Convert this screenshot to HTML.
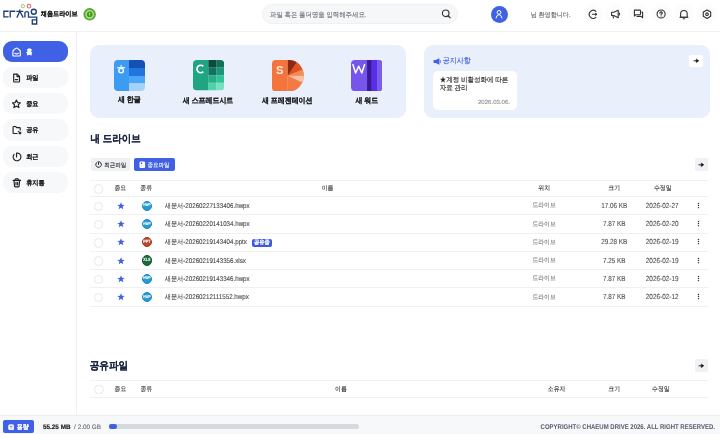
<!DOCTYPE html>
<html lang="ko"><head><meta charset="utf-8">
<style>
#w{position:absolute;left:0;top:0;width:720px;height:434px;overflow:hidden;will-change:transform}
*{box-sizing:border-box;margin:0;padding:0}
html,body{width:720px;height:434px;overflow:hidden;background:#fff;font-family:"Liberation Sans",sans-serif;color:#222}
.a{position:absolute}
.t{position:absolute;white-space:nowrap;line-height:1;text-rendering:geometricPrecision}
</style></head><body><div id="w">

<div class="a" style="left:0px;top:30.6px;width:720px;height:1px;background:#eff1f4;border-radius:0px;"></div>
<svg class="a" style="left:0px;top:0px" width="40" height="28" viewBox="0 0 40 28"><g fill="none" stroke="#1f3f78" stroke-width="1.35" stroke-linejoin="miter"><path d="M8.6 11.2H3.9V16.9H8.6"/><path d="M10.2 17.4V11.2H15.3"/><path d="M16.3 11.3H23.3M19.8 9.6V11.3M19.8 11.3L16.9 17.6M19.8 11.3L23.2 17.6"/><path d="M24.9 17.6V12.8Q24.9 11.6 26.7 11.6Q28.5 11.6 28.5 12.8V17.1H36.7V24H32.3V19.8H36.7"/><circle cx="33.8" cy="11.7" r="2.5"/></g><circle cx="22.9" cy="6.2" r="1.65" fill="none" stroke="#9cc46e" stroke-width="1"/><circle cx="29.0" cy="6.2" r="1.75" fill="none" stroke="#dc7279" stroke-width="1.15"/></svg>
<div class="t" style="left:40.8px;top:12.0px;font-size:6.15px;font-weight:700;color:#1a1a1a;letter-spacing:0.00px;;transform:scaleY(1.1);transform-origin:0 60%;-webkit-text-stroke:0.09px #1a1a1a;">채움드라이브</div>
<svg class="a" style="left:82.5px;top:8px" width="13.5" height="13" viewBox="0 0 13.5 13"><circle cx="6.65" cy="6.3" r="6.2" fill="#5ea43a"/><circle cx="6.65" cy="6.3" r="3.7" fill="#4f9430" stroke="#a8f07e" stroke-width="1.3"/><path d="M6.65 4.6V7.4" stroke="#b8f598" stroke-width="0.9"/></svg>
<div class="a" style="left:261.5px;top:4px;width:196px;height:20.3px;background:#f6f7f9;border-radius:10.2px;border:1px solid #eef0f3"></div>
<div class="t" style="left:270px;top:12.7px;font-size:6.40px;font-weight:400;color:#66696e;letter-spacing:0.00px;;transform:scaleY(1.1);transform-origin:0 60%;-webkit-text-stroke:0.075px #66696e;">파일 혹은 폴더명을 입력해주세요.</div>
<svg class="a" style="left:441px;top:9px" width="11" height="10" viewBox="0 0 11 10"><circle cx="4.7" cy="4.3" r="3.3" fill="none" stroke="#333" stroke-width="1.15"/><path d="M7.1 6.7L9.5 9.1" stroke="#333" stroke-width="1.3"/></svg>
<div class="a" style="left:490.8px;top:5.6px;width:17px;height:17px;background:#3f62e4;border-radius:8.5px;"></div>
<svg class="a" style="left:494.3px;top:8.6px" width="10" height="11" viewBox="0 0 10 11"><circle cx="5" cy="3.4" r="1.9" fill="none" stroke="#fff" stroke-width="1"/><path d="M2 9.4Q2.6 5.6 5 5.6Q7.4 5.6 8 9.4" fill="none" stroke="#fff" stroke-width="1"/></svg>
<div class="t" style="left:530.7px;top:12.8px;font-size:6.10px;font-weight:400;color:#555;letter-spacing:0.00px;;transform:scaleY(1.1);transform-origin:0 60%;-webkit-text-stroke:0.075px #555;">님 환영합니다.</div>
<div class="a" style="left:582.6px;top:4px;width:20px;height:20px;background:#fcfcfd;border-radius:10px;"></div>
<div class="a" style="left:605.4px;top:4px;width:20px;height:20px;background:#fcfcfd;border-radius:10px;"></div>
<div class="a" style="left:628.4px;top:4px;width:20px;height:20px;background:#fcfcfd;border-radius:10px;"></div>
<div class="a" style="left:650.7px;top:4px;width:20px;height:20px;background:#fcfcfd;border-radius:10px;"></div>
<div class="a" style="left:674px;top:4px;width:20px;height:20px;background:#fcfcfd;border-radius:10px;"></div>
<div class="a" style="left:696.5px;top:4px;width:20px;height:20px;background:#fcfcfd;border-radius:10px;"></div>
<svg class="a" style="left:586px;top:8px" width="12" height="12" viewBox="0 0 12 12"><path d="M9.9 3.3A4 4 0 1 0 9.9 9.3" fill="none" stroke="#333" stroke-width="1.1" stroke-linejoin="round" stroke-linecap="round"/><path d="M6.4 6.3H10.6" fill="none" stroke="#333" stroke-width="1.1" stroke-linejoin="round" stroke-linecap="round"/><path d="M9.6 5.2L10.9 6.3L9.6 7.4Z" fill="#333" stroke="#333" stroke-width="0.8" stroke-linejoin="round"/></svg>
<svg class="a" style="left:610px;top:9px" width="11" height="11" viewBox="0 0 11 11"><path d="M1.6 3.3H3.8L8.2 1.3V8.7L3.8 6.5H1.6Z" fill="none" stroke="#333" stroke-width="1.1" stroke-linejoin="round" stroke-linecap="round"/><path d="M2.9 6.6L3.5 8.9" fill="none" stroke="#333" stroke-width="1.1" stroke-linejoin="round" stroke-linecap="round"/><path d="M9.3 4.1Q9.9 5 9.3 5.9" fill="none" stroke="#333" stroke-width="1.1" stroke-linejoin="round" stroke-linecap="round"/></svg>
<svg class="a" style="left:633px;top:9px" width="11" height="10" viewBox="0 0 11 10"><path d="M1.4 1.1H6.9Q7.5 1.1 7.5 1.7V5.1Q7.5 5.7 6.9 5.7H2.9L1.4 7Z" fill="none" stroke="#333" stroke-width="1.1" stroke-linejoin="round" stroke-linecap="round"/><path d="M4 7.4H8L9.6 8.7V3.6Q9.6 3.1 9.1 3.1H8.8" fill="none" stroke="#333" stroke-width="1.1" stroke-linejoin="round" stroke-linecap="round"/></svg>
<svg class="a" style="left:656px;top:9px" width="10" height="10" viewBox="0 0 10 10"><circle cx="5.1" cy="5" r="4.05" fill="none" stroke="#333" stroke-width="1.1" stroke-linejoin="round" stroke-linecap="round"/><path d="M3.9 4.1Q3.9 2.9 5.1 2.9Q6.3 2.9 6.3 3.9Q6.3 4.6 5.1 5.1V5.7" fill="none" stroke="#333" stroke-width="1.1" stroke-linejoin="round" stroke-linecap="round"/><circle cx="5.1" cy="7.1" r="0.55" fill="#333"/></svg>
<svg class="a" style="left:679px;top:8.5px" width="10" height="11" viewBox="0 0 10 11"><path d="M1.6 8.2V5.1Q1.6 1.5 4.9 1.5Q8.2 1.5 8.2 5.1V8.2Z" fill="none" stroke="#333" stroke-width="1.1" stroke-linejoin="round" stroke-linecap="round"/><path d="M0.9 8.3H8.9" fill="none" stroke="#333" stroke-width="1.1" stroke-linejoin="round" stroke-linecap="round"/><path d="M4.2 9.8H5.6" fill="none" stroke="#333" stroke-width="1.1" stroke-linejoin="round" stroke-linecap="round"/></svg>
<svg class="a" style="left:701.5px;top:9px" width="10" height="10" viewBox="0 0 10 10"><path d="M5 0.9L8.7 3.05V7.35L5 9.5L1.3 7.35V3.05Z" fill="none" stroke="#333" stroke-width="1.1" stroke-linejoin="round" stroke-linecap="round"/><circle cx="5" cy="5.2" r="1.3" fill="none" stroke="#333" stroke-width="1.1" stroke-linejoin="round" stroke-linecap="round"/></svg>
<div class="a" style="left:75.9px;top:31px;width:1px;height:384px;background:#eff1f4;border-radius:0px;"></div>
<div class="a" style="left:3px;top:40.8px;width:64.7px;height:21.3px;background:#4060e6;border-radius:9px;"></div>
<svg class="a" style="left:12px;top:46.5px" width="10" height="10" viewBox="0 0 10 10"><path d="M0.9 8.5V4.6Q0.9 3.8 1.5 3.3L3.7 1.4Q4.6 0.7 5.5 1.4L7.7 3.3Q8.3 3.8 8.3 4.6V8.5Q8.3 9 7.8 9H1.4Q0.9 9 0.9 8.5Z" fill="none" stroke="#fff" stroke-width="1.15" stroke-linejoin="round" stroke-linecap="round"/><path d="M2.9 6.3Q4.6 7.6 6.3 6.3" fill="none" stroke="#fff" stroke-width="1.15" stroke-linejoin="round" stroke-linecap="round"/></svg>
<div class="t" style="left:26.2px;top:49.699999999999996px;font-size:6.15px;font-weight:700;color:#fff;letter-spacing:0.00px;;transform:scaleY(1.1);transform-origin:0 60%;-webkit-text-stroke:0.04px #fff;">홈</div>
<div class="a" style="left:3px;top:67px;width:64.7px;height:21.3px;background:#f7f8fa;border-radius:9px;"></div>
<svg class="a" style="left:12px;top:72.7px" width="10" height="10" viewBox="0 0 10 10"><path d="M1.7 1.1H5.2L7.5 3.4V8.5Q7.5 9 7 9H2.2Q1.7 9 1.7 8.5Z" fill="none" stroke="#222" stroke-width="1.15" stroke-linejoin="round" stroke-linecap="round"/><path d="M5 1.2V3.6H7.4" fill="none" stroke="#222" stroke-width="1.15" stroke-linejoin="round" stroke-linecap="round"/><path d="M3.3 6.6H5.6" fill="none" stroke="#222" stroke-width="1.15" stroke-linejoin="round" stroke-linecap="round"/></svg>
<div class="t" style="left:26.2px;top:75.9px;font-size:6.15px;font-weight:700;color:#222;letter-spacing:0.00px;;transform:scaleY(1.1);transform-origin:0 60%;-webkit-text-stroke:0.04px #222;">파일</div>
<div class="a" style="left:3px;top:93.2px;width:64.7px;height:21.3px;background:#f7f8fa;border-radius:9px;"></div>
<svg class="a" style="left:12px;top:98.9px" width="10" height="10" viewBox="0 0 10 10"><path d="M4.4 1.1L5.6 3.6L8.3 3.9L6.3 5.8L6.9 8.6L4.4 7.2L1.9 8.6L2.5 5.8L0.5 3.9L3.2 3.6Z" fill="none" stroke="#222" stroke-width="1.15" stroke-linejoin="round" stroke-linecap="round"/></svg>
<div class="t" style="left:26.2px;top:102.10000000000001px;font-size:6.15px;font-weight:700;color:#222;letter-spacing:0.00px;;transform:scaleY(1.1);transform-origin:0 60%;-webkit-text-stroke:0.04px #222;">중요</div>
<div class="a" style="left:3px;top:119.4px;width:64.7px;height:21.3px;background:#f7f8fa;border-radius:9px;"></div>
<svg class="a" style="left:12px;top:125.10000000000001px" width="10" height="10" viewBox="0 0 10 10"><path d="M5.1 8.5H1.8Q1.1 8.5 1.1 7.8V2.2Q1.1 1.5 1.8 1.5H3.6L4.6 2.6H7.5Q8.2 2.6 8.2 3.3V5.1" fill="none" stroke="#222" stroke-width="1.15" stroke-linejoin="round" stroke-linecap="round"/><path d="M6.3 6.4L8.4 8.5" fill="none" stroke="#222" stroke-width="1.15" stroke-linejoin="round" stroke-linecap="round"/><path d="M8.9 6.8V9H6.7Z" fill="#222" stroke="#222" stroke-width="0.5" stroke-linejoin="round"/></svg>
<div class="t" style="left:26.2px;top:128.3px;font-size:6.15px;font-weight:700;color:#222;letter-spacing:0.00px;;transform:scaleY(1.1);transform-origin:0 60%;-webkit-text-stroke:0.04px #222;">공유</div>
<div class="a" style="left:3px;top:146px;width:64.7px;height:21.3px;background:#f7f8fa;border-radius:9px;"></div>
<svg class="a" style="left:12px;top:151.7px" width="10" height="10" viewBox="0 0 10 10"><path d="M2.1 2.3A3.9 3.9 0 1 0 4.55 1V4.9" fill="none" stroke="#222" stroke-width="1.15" stroke-linejoin="round" stroke-linecap="round"/></svg>
<div class="t" style="left:26.2px;top:154.9px;font-size:6.15px;font-weight:700;color:#222;letter-spacing:0.00px;;transform:scaleY(1.1);transform-origin:0 60%;-webkit-text-stroke:0.04px #222;">최근</div>
<div class="a" style="left:3px;top:171.8px;width:64.7px;height:21.3px;background:#f7f8fa;border-radius:9px;"></div>
<svg class="a" style="left:12px;top:177.5px" width="10" height="10" viewBox="0 0 10 10"><path d="M1.1 2.4H8.6" fill="none" stroke="#222" stroke-width="1.15" stroke-linejoin="round" stroke-linecap="round"/><path d="M3.3 2.4V1.4Q3.3 0.9 3.8 0.9H5.8Q6.3 0.9 6.3 1.4V2.4" fill="none" stroke="#222" stroke-width="1.15" stroke-linejoin="round" stroke-linecap="round"/><path d="M2 2.4L2.5 8.2Q2.6 8.8 3.2 8.8H6.4Q7 8.8 7.1 8.2L7.6 2.4" fill="none" stroke="#222" stroke-width="1.15" stroke-linejoin="round" stroke-linecap="round"/><path d="M4 4.4V6.8M5.6 4.4V6.8" fill="none" stroke="#222" stroke-width="1.15" stroke-linejoin="round" stroke-linecap="round"/></svg>
<div class="t" style="left:26.2px;top:180.70000000000002px;font-size:6.15px;font-weight:700;color:#222;letter-spacing:0.00px;;transform:scaleY(1.1);transform-origin:0 60%;-webkit-text-stroke:0.04px #222;">휴지통</div>
<div class="a" style="left:90px;top:44.6px;width:315.5px;height:73.8px;background:#eaeffc;border-radius:9px;"></div>
<svg class="a" style="left:114px;top:60px" width="31" height="31" viewBox="0 0 31 31"><defs><clipPath id="c1"><rect x="0" y="0" width="31" height="31" rx="4"/></clipPath></defs><g clip-path="url(#c1)"><rect x="0" y="0" width="15" height="31" fill="#3d9cf1"/><rect x="15" y="0" width="16" height="8" fill="#1550b5"/><rect x="15" y="8" width="16" height="8" fill="#2075de"/><rect x="15" y="16" width="16" height="7.5" fill="#4ba7f5"/><rect x="15" y="23.5" width="16" height="7.5" fill="#a5d2f8"/></g><path d="M7.1 5V6.6" stroke="#fff" stroke-width="1.2"/><path d="M3.2 7.9Q7.1 6.6 11 7.9" fill="none" stroke="#fff" stroke-width="1.2"/><circle cx="7.1" cy="10.6" r="2.3" fill="none" stroke="#fff" stroke-width="1.35"/></svg>
<div class="t" style="left:118px;top:97.6px;font-size:6.95px;font-weight:700;color:#222;letter-spacing:0.00px;;transform:scaleY(1.1);transform-origin:0 60%;-webkit-text-stroke:0.09px #222;">새 한글</div>
<svg class="a" style="left:193px;top:60.3px" width="31.3" height="30.5" viewBox="0 0 31.3 30.5"><defs><clipPath id="c2"><rect x="0" y="0" width="31.3" height="30.5" rx="4"/></clipPath></defs><g clip-path="url(#c2)"><rect x="0" y="0" width="15.5" height="30.5" fill="#20a582"/><rect x="15.4" y="0" width="8" height="7.6" fill="#0a4b3b"/><rect x="23.3" y="0" width="8" height="7.6" fill="#117058"/><rect x="15.4" y="7.5" width="8" height="7.7" fill="#13735b"/><rect x="23.3" y="7.5" width="8" height="7.7" fill="#1a977a"/><rect x="15.4" y="15.2" width="8" height="7.6" fill="#26ad89"/><rect x="23.3" y="15.2" width="8" height="7.6" fill="#30c398"/><rect x="15.4" y="22.8" width="8" height="7.7" fill="#4fd2a9"/><rect x="23.3" y="22.8" width="8" height="7.7" fill="#78e0bf"/></g><path d="M10.3 6.4A3.7 3.7 0 1 0 10.3 11.6" fill="none" stroke="#fff" stroke-width="1.6"/></svg>
<div class="t" style="left:182.8px;top:98.9px;font-size:6.95px;font-weight:700;color:#222;letter-spacing:0.00px;;transform:scaleY(1.1);transform-origin:0 60%;-webkit-text-stroke:0.09px #222;">새 스프레드시트</div>
<svg class="a" style="left:271.9px;top:59.6px" width="32" height="31.5" viewBox="0 0 32 31.5"><path d="M3.8 0H15.8V31.5H3.8Q0 31.5 0 27.7V3.8Q0 0 3.8 0Z" fill="#f3743c"/><path d="M15.8 0H17A14.7 15.75 0 0 1 17 31.5H15.8Z" fill="#f47a44"/><path d="M15.8 15.75V0H17Q21.5 0 24.8 2.3Z" fill="#8b2915"/><path d="M15.8 15.75L24.8 2.3Q28.6 5 30.4 9.6Z" fill="#e2521f"/><path d="M15.8 15.75L30.4 9.6Q31.7 12.6 31.7 15.75Z" fill="#f48b58"/><path d="M15.8 15.75H31.7Q31.7 19.4 30.1 22.5Z" fill="#f9c0a2"/><text x="3.9" y="14.1" font-family="Liberation Sans" font-weight="700" font-size="11.2" fill="#fde8da">S</text></svg>
<div class="t" style="left:262px;top:98.9px;font-size:6.95px;font-weight:700;color:#222;letter-spacing:0.00px;;transform:scaleY(1.1);transform-origin:0 60%;-webkit-text-stroke:0.09px #222;">새 프레젠테이션</div>
<svg class="a" style="left:350.9px;top:60px" width="31.6" height="31.2" viewBox="0 0 31.6 31.2"><defs><clipPath id="c4"><rect x="0" y="0" width="31.6" height="31.2" rx="4"/></clipPath></defs><g clip-path="url(#c4)"><rect x="0" y="0" width="31.6" height="31.2" fill="#7555ea"/><rect x="16.1" y="0" width="4.6" height="31.2" fill="#3a1a98"/><rect x="20.6" y="0" width="5.4" height="31.2" fill="#5a2ee6"/><rect x="26" y="0" width="5.6" height="31.2" fill="#7a5cf0"/></g><path d="M1.9 4.6L4.6 13L7.7 6.3L10.8 13L13.6 4.6" fill="none" stroke="#fff" stroke-width="1.5" stroke-linejoin="round" stroke-linecap="round"/></svg>
<div class="t" style="left:355.4px;top:98.9px;font-size:6.95px;font-weight:700;color:#222;letter-spacing:0.00px;;transform:scaleY(1.1);transform-origin:0 60%;-webkit-text-stroke:0.09px #222;">새 워드</div>
<div class="a" style="left:424px;top:44.6px;width:286.3px;height:73.8px;background:#eaeffc;border-radius:9px;"></div>
<svg class="a" style="left:433.3px;top:58px" width="8" height="7" viewBox="0 0 8 7"><path d="M0.6 2H2.6L6.4 0.3V6.7L2.6 5H0.6Z" fill="#4060e6"/><path d="M7.3 2.1V4.9" stroke="#4060e6" stroke-width="0.8"/></svg>
<div class="t" style="left:442.8px;top:58.1px;font-size:7.00px;font-weight:500;color:#4060e6;letter-spacing:0.00px;;transform:scaleY(1.1);transform-origin:0 60%;-webkit-text-stroke:0.125px #4060e6;">공지사항</div>
<div class="a" style="left:433px;top:71px;width:84px;height:38.6px;background:#fff;border-radius:5px;"></div>
<div class="t" style="left:439.7px;top:76.8px;font-size:6.50px;font-weight:500;color:#222;letter-spacing:0.00px;line-height:8.3px;transform:scaleY(1.1);transform-origin:0 60%;-webkit-text-stroke:0.1px #222;">★계정 비활성화에 따른<br>자료 관리</div>
<div class="t" style="left:478px;top:100px;font-size:6.05px;font-weight:400;color:#8a8d93;letter-spacing:0.00px;;-webkit-text-stroke:0.1px #8a8d93;">2026.03.06.</div>
<div class="a" style="left:688.6px;top:54.5px;width:14px;height:12.1px;background:#fff;border-radius:2px;"></div>
<svg class="a" style="left:692.8px;top:57.6px" width="7" height="6" viewBox="0 0 7 6"><path d="M0.6 2.8H3.8" stroke="#111" stroke-width="0.9"/><path d="M3.3 0.9L5.9 2.8L3.3 4.7Z" fill="#111" stroke="#111" stroke-width="0.4" stroke-linejoin="round"/></svg>
<div class="t" style="left:90.5px;top:135.1px;font-size:9.50px;font-weight:700;color:#1d2744;letter-spacing:0.00px;;transform:scaleY(1.1);transform-origin:0 60%;-webkit-text-stroke:0.15px #1d2744;">내 드라이브</div>
<div class="a" style="left:90.5px;top:158.4px;width:39.4px;height:12.5px;background:#eef0f3;border-radius:2px;"></div>
<svg class="a" style="left:94.5px;top:161.2px" width="7" height="7" viewBox="0 0 7 7"><path d="M2.1 1.1A2.8 2.8 0 1 0 3.5 0.7V3.5" fill="none" stroke="#222" stroke-width="0.95" stroke-linecap="round"/></svg>
<div class="t" style="left:104.25px;top:163.6px;font-size:5.50px;font-weight:500;color:#222;letter-spacing:0.00px;;transform:scaleY(1.1);transform-origin:0 60%;-webkit-text-stroke:0.1px #222;">최근파일</div>
<div class="a" style="left:134.25px;top:158.4px;width:40.6px;height:12.5px;background:#4060e6;border-radius:2px;"></div>
<svg class="a" style="left:138.5px;top:161px" width="7" height="7.5" viewBox="0 0 7 7.5"><path d="M1.8 0.4H4.8Q6.1 0.4 6.1 1.7V6Q6.1 7.1 5 7.1H1.6Q0.5 7.1 0.5 6V1.7Q0.5 0.4 1.8 0.4Z" fill="#fff"/><circle cx="2.6" cy="2.2" r="0.75" fill="#2a3a8a"/><path d="M2 4.6H4.6" stroke="#cdd6f7" stroke-width="0.7"/></svg>
<div class="t" style="left:147.4px;top:163.6px;font-size:5.50px;font-weight:500;color:#fff;letter-spacing:0.00px;;transform:scaleY(1.1);transform-origin:0 60%;-webkit-text-stroke:0.1px #fff;">중요파일</div>
<div class="a" style="left:695px;top:158px;width:12.8px;height:13px;background:#eff1f4;border-radius:2px;"></div>
<svg class="a" style="left:698.3px;top:161.7px" width="7" height="6" viewBox="0 0 7 6"><path d="M0.6 2.8H3.8" stroke="#111" stroke-width="0.9"/><path d="M3.3 0.9L5.9 2.8L3.3 4.7Z" fill="#111" stroke="#111" stroke-width="0.4" stroke-linejoin="round"/></svg>
<div class="a" style="left:90px;top:179.6px;width:618px;height:1px;background:#eef0f3;border-radius:0px;"></div>
<div class="a" style="left:93.75px;top:184.25px;width:9.5px;height:9.5px;background:#fff;border-radius:4.75px;border:1px solid #e6e7eb"></div>
<div class="t" style="left:114.4px;top:187.2px;font-size:5.90px;font-weight:500;color:#2a2a2a;letter-spacing:0.00px;;transform:scaleY(1.1);transform-origin:0 60%;-webkit-text-stroke:0.08px #2a2a2a;">중요</div>
<div class="t" style="left:140.3px;top:187.2px;font-size:5.90px;font-weight:500;color:#2a2a2a;letter-spacing:0.00px;;transform:scaleY(1.1);transform-origin:0 60%;-webkit-text-stroke:0.08px #2a2a2a;">종류</div>
<div class="t" style="left:321.7px;top:187.2px;font-size:5.90px;font-weight:500;color:#2a2a2a;letter-spacing:0.00px;;transform:scaleY(1.1);transform-origin:0 60%;-webkit-text-stroke:0.08px #2a2a2a;">이름</div>
<div class="t" style="left:538.3px;top:187.2px;font-size:5.90px;font-weight:500;color:#2a2a2a;letter-spacing:0.00px;;transform:scaleY(1.1);transform-origin:0 60%;-webkit-text-stroke:0.08px #2a2a2a;">위치</div>
<div class="t" style="left:608.3px;top:187.2px;font-size:5.90px;font-weight:500;color:#2a2a2a;letter-spacing:0.00px;;transform:scaleY(1.1);transform-origin:0 60%;-webkit-text-stroke:0.08px #2a2a2a;">크기</div>
<div class="t" style="left:653.9px;top:187.2px;font-size:5.90px;font-weight:500;color:#2a2a2a;letter-spacing:0.00px;;transform:scaleY(1.1);transform-origin:0 60%;-webkit-text-stroke:0.08px #2a2a2a;">수정일</div>
<div class="a" style="left:90px;top:196.4px;width:618px;height:1px;background:#eef0f3;border-radius:0px;"></div>
<div class="a" style="left:93.75px;top:201.575px;width:9.5px;height:9.5px;background:#fff;border-radius:4.75px;border:1px solid #e6e7eb"></div>
<svg class="a" style="left:116.8px;top:201.92499999999998px" width="8" height="8" viewBox="0 0 8 8"><path d="M4 0.3L5 2.8L7.7 2.9L5.6 4.6L6.3 7.3L4 5.8L1.7 7.3L2.4 4.6L0.3 2.9L3 2.8Z" fill="#4060e6"/></svg>
<div class="a" style="left:141.8px;top:200.725px;width:10.2px;height:10.2px;background:#2a9ad4;border-radius:5.1px;border:0.6px solid #1f86bd"></div>
<div class="t" style="left:141.8px;top:204.325px;font-size:3.10px;font-weight:700;color:#fff;letter-spacing:0.00px;width:10.2px;text-align:center;transform:scaleY(1.25);transform-origin:0 50%;-webkit-text-stroke:0.08px #fff;">HWP</div>
<div class="t" style="left:164.7px;top:203.92499999999998px;font-size:6.20px;font-weight:400;color:#4a4a4a;letter-spacing:0.00px;transform:scaleY(1.12);transform-origin:0 60%;-webkit-text-stroke:0.1px #4a4a4a;">새문서-20260227133406.hwpx</div>
<div class="t" style="left:532.5px;top:204.42499999999998px;font-size:5.80px;font-weight:400;color:#6b6b6b;letter-spacing:0.00px;;transform:scaleY(1.1);transform-origin:0 60%;-webkit-text-stroke:0.06px #6b6b6b;">드라이브</div>
<div class="t" style="left:584.3px;top:203.825px;font-size:6.35px;font-weight:400;color:#555;letter-spacing:0.00px;width:60px;text-align:center;transform:scaleY(1.15);transform-origin:0 60%;-webkit-text-stroke:0.1px #555;">17.06 KB</div>
<div class="t" style="left:645.8px;top:203.825px;font-size:6.40px;font-weight:400;color:#555;letter-spacing:0.00px;transform:scaleY(1.15);transform-origin:0 60%;-webkit-text-stroke:0.1px #555;">2026-02-27</div>
<svg class="a" style="left:696.8px;top:201.825px" width="3" height="8" viewBox="0 0 3 8"><circle cx="1.5" cy="1.45" r="0.72" fill="#333"/><circle cx="1.5" cy="3.55" r="0.72" fill="#333"/><circle cx="1.5" cy="5.65" r="0.72" fill="#333"/></svg>
<div class="a" style="left:90px;top:214.45px;width:618px;height:1px;background:#eef0f3;border-radius:0px;"></div>
<div class="a" style="left:93.75px;top:219.825px;width:9.5px;height:9.5px;background:#fff;border-radius:4.75px;border:1px solid #e6e7eb"></div>
<svg class="a" style="left:116.8px;top:220.17499999999998px" width="8" height="8" viewBox="0 0 8 8"><path d="M4 0.3L5 2.8L7.7 2.9L5.6 4.6L6.3 7.3L4 5.8L1.7 7.3L2.4 4.6L0.3 2.9L3 2.8Z" fill="#4060e6"/></svg>
<div class="a" style="left:141.8px;top:218.975px;width:10.2px;height:10.2px;background:#2a9ad4;border-radius:5.1px;border:0.6px solid #1f86bd"></div>
<div class="t" style="left:141.8px;top:222.575px;font-size:3.10px;font-weight:700;color:#fff;letter-spacing:0.00px;width:10.2px;text-align:center;transform:scaleY(1.25);transform-origin:0 50%;-webkit-text-stroke:0.08px #fff;">HWP</div>
<div class="t" style="left:164.7px;top:222.17499999999998px;font-size:6.20px;font-weight:400;color:#4a4a4a;letter-spacing:0.00px;transform:scaleY(1.12);transform-origin:0 60%;-webkit-text-stroke:0.1px #4a4a4a;">새문서-20260220141034.hwpx</div>
<div class="t" style="left:532.5px;top:222.67499999999998px;font-size:5.80px;font-weight:400;color:#6b6b6b;letter-spacing:0.00px;;transform:scaleY(1.1);transform-origin:0 60%;-webkit-text-stroke:0.06px #6b6b6b;">드라이브</div>
<div class="t" style="left:584.3px;top:222.075px;font-size:6.35px;font-weight:400;color:#555;letter-spacing:0.00px;width:60px;text-align:center;transform:scaleY(1.15);transform-origin:0 60%;-webkit-text-stroke:0.1px #555;">7.87 KB</div>
<div class="t" style="left:645.8px;top:222.075px;font-size:6.40px;font-weight:400;color:#555;letter-spacing:0.00px;transform:scaleY(1.15);transform-origin:0 60%;-webkit-text-stroke:0.1px #555;">2026-02-20</div>
<svg class="a" style="left:696.8px;top:220.075px" width="3" height="8" viewBox="0 0 3 8"><circle cx="1.5" cy="1.45" r="0.72" fill="#333"/><circle cx="1.5" cy="3.55" r="0.72" fill="#333"/><circle cx="1.5" cy="5.65" r="0.72" fill="#333"/></svg>
<div class="a" style="left:90px;top:232.7px;width:618px;height:1px;background:#eef0f3;border-radius:0px;"></div>
<div class="a" style="left:93.75px;top:238.075px;width:9.5px;height:9.5px;background:#fff;border-radius:4.75px;border:1px solid #e6e7eb"></div>
<svg class="a" style="left:116.8px;top:238.42499999999998px" width="8" height="8" viewBox="0 0 8 8"><path d="M4 0.3L5 2.8L7.7 2.9L5.6 4.6L6.3 7.3L4 5.8L1.7 7.3L2.4 4.6L0.3 2.9L3 2.8Z" fill="#4060e6"/></svg>
<div class="a" style="left:141.8px;top:237.225px;width:10.2px;height:10.2px;background:#b94a2d;border-radius:5.1px;border:0.6px solid #9c3a22"></div>
<div class="t" style="left:141.8px;top:240.575px;font-size:3.70px;font-weight:700;color:#fff;letter-spacing:0.00px;width:10.2px;text-align:center;transform:scaleY(1.25);transform-origin:0 50%;-webkit-text-stroke:0.08px #fff;">PPT</div>
<div class="t" style="left:164.7px;top:240.42499999999998px;font-size:6.20px;font-weight:400;color:#4a4a4a;letter-spacing:0.00px;transform:scaleY(1.12);transform-origin:0 60%;-webkit-text-stroke:0.1px #4a4a4a;">새문서-20260219143404.pptx</div>
<div class="a" style="left:251.6px;top:238.92499999999998px;width:20px;height:7.9px;background:#3d5ae0;border-radius:2px;"></div>
<div class="t" style="left:253.9px;top:241.325px;font-size:5.25px;font-weight:700;color:#fff;letter-spacing:0.00px;;transform:scaleY(1.1);transform-origin:0 60%;-webkit-text-stroke:0.025px #fff;">공유중</div>
<div class="t" style="left:532.5px;top:240.92499999999998px;font-size:5.80px;font-weight:400;color:#6b6b6b;letter-spacing:0.00px;;transform:scaleY(1.1);transform-origin:0 60%;-webkit-text-stroke:0.06px #6b6b6b;">드라이브</div>
<div class="t" style="left:584.3px;top:240.325px;font-size:6.35px;font-weight:400;color:#555;letter-spacing:0.00px;width:60px;text-align:center;transform:scaleY(1.15);transform-origin:0 60%;-webkit-text-stroke:0.1px #555;">29.28 KB</div>
<div class="t" style="left:645.8px;top:240.325px;font-size:6.40px;font-weight:400;color:#555;letter-spacing:0.00px;transform:scaleY(1.15);transform-origin:0 60%;-webkit-text-stroke:0.1px #555;">2026-02-19</div>
<svg class="a" style="left:696.8px;top:238.325px" width="3" height="8" viewBox="0 0 3 8"><circle cx="1.5" cy="1.45" r="0.72" fill="#333"/><circle cx="1.5" cy="3.55" r="0.72" fill="#333"/><circle cx="1.5" cy="5.65" r="0.72" fill="#333"/></svg>
<div class="a" style="left:90px;top:250.95px;width:618px;height:1px;background:#eef0f3;border-radius:0px;"></div>
<div class="a" style="left:93.75px;top:256.325px;width:9.5px;height:9.5px;background:#fff;border-radius:4.75px;border:1px solid #e6e7eb"></div>
<svg class="a" style="left:116.8px;top:256.675px" width="8" height="8" viewBox="0 0 8 8"><path d="M4 0.3L5 2.8L7.7 2.9L5.6 4.6L6.3 7.3L4 5.8L1.7 7.3L2.4 4.6L0.3 2.9L3 2.8Z" fill="#4060e6"/></svg>
<div class="a" style="left:141.8px;top:255.475px;width:10.2px;height:10.2px;background:#1b6a3a;border-radius:5.1px;border:0.6px solid #135a2e"></div>
<div class="t" style="left:141.8px;top:258.825px;font-size:3.70px;font-weight:700;color:#fff;letter-spacing:0.00px;width:10.2px;text-align:center;transform:scaleY(1.25);transform-origin:0 50%;-webkit-text-stroke:0.08px #fff;">XLS</div>
<div class="t" style="left:164.7px;top:258.675px;font-size:6.20px;font-weight:400;color:#4a4a4a;letter-spacing:0.00px;transform:scaleY(1.12);transform-origin:0 60%;-webkit-text-stroke:0.1px #4a4a4a;">새문서-20260219143356.xlsx</div>
<div class="t" style="left:532.5px;top:259.175px;font-size:5.80px;font-weight:400;color:#6b6b6b;letter-spacing:0.00px;;transform:scaleY(1.1);transform-origin:0 60%;-webkit-text-stroke:0.06px #6b6b6b;">드라이브</div>
<div class="t" style="left:584.3px;top:258.575px;font-size:6.35px;font-weight:400;color:#555;letter-spacing:0.00px;width:60px;text-align:center;transform:scaleY(1.15);transform-origin:0 60%;-webkit-text-stroke:0.1px #555;">7.25 KB</div>
<div class="t" style="left:645.8px;top:258.575px;font-size:6.40px;font-weight:400;color:#555;letter-spacing:0.00px;transform:scaleY(1.15);transform-origin:0 60%;-webkit-text-stroke:0.1px #555;">2026-02-19</div>
<svg class="a" style="left:696.8px;top:256.575px" width="3" height="8" viewBox="0 0 3 8"><circle cx="1.5" cy="1.45" r="0.72" fill="#333"/><circle cx="1.5" cy="3.55" r="0.72" fill="#333"/><circle cx="1.5" cy="5.65" r="0.72" fill="#333"/></svg>
<div class="a" style="left:90px;top:269.2px;width:618px;height:1px;background:#eef0f3;border-radius:0px;"></div>
<div class="a" style="left:93.75px;top:274.575px;width:9.5px;height:9.5px;background:#fff;border-radius:4.75px;border:1px solid #e6e7eb"></div>
<svg class="a" style="left:116.8px;top:274.925px" width="8" height="8" viewBox="0 0 8 8"><path d="M4 0.3L5 2.8L7.7 2.9L5.6 4.6L6.3 7.3L4 5.8L1.7 7.3L2.4 4.6L0.3 2.9L3 2.8Z" fill="#4060e6"/></svg>
<div class="a" style="left:141.8px;top:273.72499999999997px;width:10.2px;height:10.2px;background:#2a9ad4;border-radius:5.1px;border:0.6px solid #1f86bd"></div>
<div class="t" style="left:141.8px;top:277.325px;font-size:3.10px;font-weight:700;color:#fff;letter-spacing:0.00px;width:10.2px;text-align:center;transform:scaleY(1.25);transform-origin:0 50%;-webkit-text-stroke:0.08px #fff;">HWP</div>
<div class="t" style="left:164.7px;top:276.925px;font-size:6.20px;font-weight:400;color:#4a4a4a;letter-spacing:0.00px;transform:scaleY(1.12);transform-origin:0 60%;-webkit-text-stroke:0.1px #4a4a4a;">새문서-20260219143346.hwpx</div>
<div class="t" style="left:532.5px;top:277.425px;font-size:5.80px;font-weight:400;color:#6b6b6b;letter-spacing:0.00px;;transform:scaleY(1.1);transform-origin:0 60%;-webkit-text-stroke:0.06px #6b6b6b;">드라이브</div>
<div class="t" style="left:584.3px;top:276.825px;font-size:6.35px;font-weight:400;color:#555;letter-spacing:0.00px;width:60px;text-align:center;transform:scaleY(1.15);transform-origin:0 60%;-webkit-text-stroke:0.1px #555;">7.87 KB</div>
<div class="t" style="left:645.8px;top:276.825px;font-size:6.40px;font-weight:400;color:#555;letter-spacing:0.00px;transform:scaleY(1.15);transform-origin:0 60%;-webkit-text-stroke:0.1px #555;">2026-02-19</div>
<svg class="a" style="left:696.8px;top:274.825px" width="3" height="8" viewBox="0 0 3 8"><circle cx="1.5" cy="1.45" r="0.72" fill="#333"/><circle cx="1.5" cy="3.55" r="0.72" fill="#333"/><circle cx="1.5" cy="5.65" r="0.72" fill="#333"/></svg>
<div class="a" style="left:90px;top:287.45px;width:618px;height:1px;background:#eef0f3;border-radius:0px;"></div>
<div class="a" style="left:93.75px;top:292.825px;width:9.5px;height:9.5px;background:#fff;border-radius:4.75px;border:1px solid #e6e7eb"></div>
<svg class="a" style="left:116.8px;top:293.175px" width="8" height="8" viewBox="0 0 8 8"><path d="M4 0.3L5 2.8L7.7 2.9L5.6 4.6L6.3 7.3L4 5.8L1.7 7.3L2.4 4.6L0.3 2.9L3 2.8Z" fill="#4060e6"/></svg>
<div class="a" style="left:141.8px;top:291.97499999999997px;width:10.2px;height:10.2px;background:#2a9ad4;border-radius:5.1px;border:0.6px solid #1f86bd"></div>
<div class="t" style="left:141.8px;top:295.575px;font-size:3.10px;font-weight:700;color:#fff;letter-spacing:0.00px;width:10.2px;text-align:center;transform:scaleY(1.25);transform-origin:0 50%;-webkit-text-stroke:0.08px #fff;">HWP</div>
<div class="t" style="left:164.7px;top:295.175px;font-size:6.20px;font-weight:400;color:#4a4a4a;letter-spacing:0.00px;transform:scaleY(1.12);transform-origin:0 60%;-webkit-text-stroke:0.1px #4a4a4a;">새문서-20260212111552.hwpx</div>
<div class="t" style="left:532.5px;top:295.675px;font-size:5.80px;font-weight:400;color:#6b6b6b;letter-spacing:0.00px;;transform:scaleY(1.1);transform-origin:0 60%;-webkit-text-stroke:0.06px #6b6b6b;">드라이브</div>
<div class="t" style="left:584.3px;top:295.075px;font-size:6.35px;font-weight:400;color:#555;letter-spacing:0.00px;width:60px;text-align:center;transform:scaleY(1.15);transform-origin:0 60%;-webkit-text-stroke:0.1px #555;">7.87 KB</div>
<div class="t" style="left:645.8px;top:295.075px;font-size:6.40px;font-weight:400;color:#555;letter-spacing:0.00px;transform:scaleY(1.15);transform-origin:0 60%;-webkit-text-stroke:0.1px #555;">2026-02-12</div>
<svg class="a" style="left:696.8px;top:293.075px" width="3" height="8" viewBox="0 0 3 8"><circle cx="1.5" cy="1.45" r="0.72" fill="#333"/><circle cx="1.5" cy="3.55" r="0.72" fill="#333"/><circle cx="1.5" cy="5.65" r="0.72" fill="#333"/></svg>
<div class="a" style="left:90px;top:305.7px;width:618px;height:1px;background:#eef0f3;border-radius:0px;"></div>
<div class="t" style="left:89.7px;top:361.5px;font-size:9.60px;font-weight:700;color:#1d2744;letter-spacing:0.00px;;transform:scaleY(1.1);transform-origin:0 60%;-webkit-text-stroke:0.15px #1d2744;">공유파일</div>
<div class="a" style="left:695px;top:359.2px;width:12.8px;height:13px;background:#eff1f4;border-radius:2px;"></div>
<svg class="a" style="left:698.3px;top:362.9px" width="7" height="6" viewBox="0 0 7 6"><path d="M0.6 2.8H3.8" stroke="#111" stroke-width="0.9"/><path d="M3.3 0.9L5.9 2.8L3.3 4.7Z" fill="#111" stroke="#111" stroke-width="0.4" stroke-linejoin="round"/></svg>
<div class="a" style="left:90px;top:380.2px;width:618px;height:1px;background:#eef0f3;border-radius:0px;"></div>
<div class="a" style="left:94.0px;top:384.75px;width:9.5px;height:9.5px;background:#fff;border-radius:4.75px;border:1px solid #e6e7eb"></div>
<div class="t" style="left:114.6px;top:387.5px;font-size:5.90px;font-weight:500;color:#2a2a2a;letter-spacing:0.00px;;transform:scaleY(1.1);transform-origin:0 60%;-webkit-text-stroke:0.08px #2a2a2a;">중요</div>
<div class="t" style="left:140.4px;top:387.5px;font-size:5.90px;font-weight:500;color:#2a2a2a;letter-spacing:0.00px;;transform:scaleY(1.1);transform-origin:0 60%;-webkit-text-stroke:0.08px #2a2a2a;">종류</div>
<div class="t" style="left:335px;top:387.5px;font-size:5.90px;font-weight:500;color:#2a2a2a;letter-spacing:0.00px;;transform:scaleY(1.1);transform-origin:0 60%;-webkit-text-stroke:0.08px #2a2a2a;">이름</div>
<div class="t" style="left:547.8px;top:387.5px;font-size:5.90px;font-weight:500;color:#2a2a2a;letter-spacing:0.00px;;transform:scaleY(1.1);transform-origin:0 60%;-webkit-text-stroke:0.08px #2a2a2a;">소유자</div>
<div class="t" style="left:608.3px;top:387.5px;font-size:5.90px;font-weight:500;color:#2a2a2a;letter-spacing:0.00px;;transform:scaleY(1.1);transform-origin:0 60%;-webkit-text-stroke:0.08px #2a2a2a;">크기</div>
<div class="t" style="left:652px;top:387.5px;font-size:5.90px;font-weight:500;color:#2a2a2a;letter-spacing:0.00px;;transform:scaleY(1.1);transform-origin:0 60%;-webkit-text-stroke:0.08px #2a2a2a;">수정일</div>
<div class="a" style="left:90px;top:397px;width:618px;height:1px;background:#eef0f3;border-radius:0px;"></div>
<div class="a" style="left:0px;top:415px;width:720px;height:19px;background:#f7f8fa;border-radius:0px;border-top:1px solid #e9ecf0"></div>
<div class="a" style="left:2.8px;top:419.8px;width:31.1px;height:12.8px;background:#4060e6;border-radius:2px;"></div>
<svg class="a" style="left:7.8px;top:423.8px" width="6.4" height="6.4" viewBox="0 0 6.4 6.4"><rect x="0.2" y="0.2" width="6" height="6" rx="2" fill="#f4f6ff"/><path d="M2 2.3H4.4" stroke="#3a4a9a" stroke-width="0.7"/><path d="M2 4H4.4" stroke="#8a96c8" stroke-width="0.6"/></svg>
<div class="t" style="left:16.7px;top:425.3px;font-size:6.00px;font-weight:700;color:#fff;letter-spacing:0.00px;;transform:scaleY(1.1);transform-origin:0 60%;-webkit-text-stroke:0.04px #fff;">용량</div>
<div class="t" style="left:43px;top:424.5px;font-size:6.35px;font-weight:700;color:#222;letter-spacing:0.00px;;-webkit-text-stroke:0.18px #222;">55.25 MB<span style="font-weight:400;color:#666;margin-left:3.6px;-webkit-text-stroke:0.1px #666">/ 2.00 GB</span></div>
<div class="a" style="left:109.2px;top:424.3px;width:250px;height:4.5px;background:#d6d9de;border-radius:2.25px;"></div>
<div class="a" style="left:109.2px;top:424.3px;width:7.6px;height:4.5px;background:#4060e6;border-radius:2.25px;"></div>
<div class="t" style="left:540.6px;top:424.7px;font-size:6.00px;font-weight:700;color:#585e70;letter-spacing:0.00px;transform:scaleY(1.15);transform-origin:0 60%;-webkit-text-stroke:0.03px #585e70;">COPYRIGHT© CHAEUM DRIVE 2026. ALL RIGHT RESERVED.</div>
</div></body></html>
